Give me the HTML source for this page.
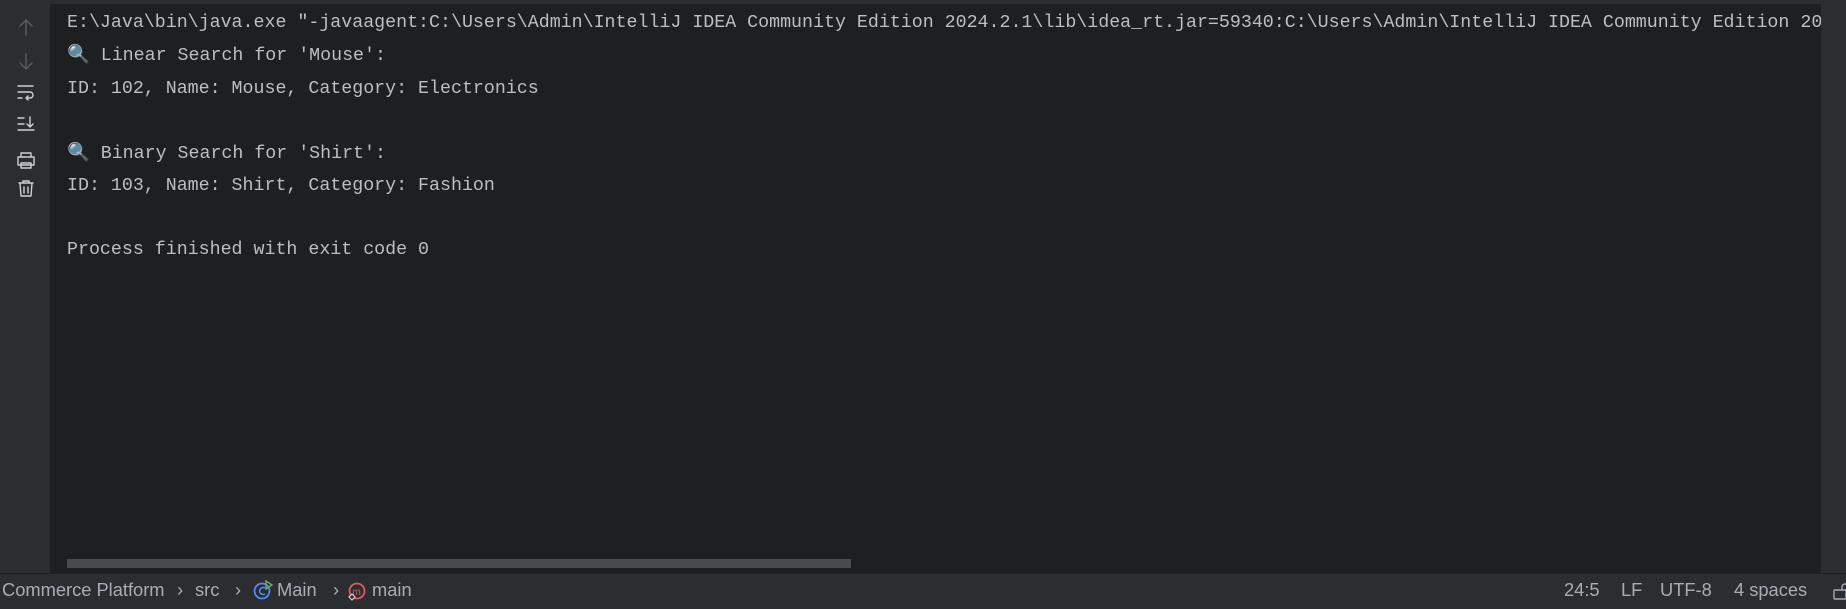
<!DOCTYPE html>
<html><head><meta charset="utf-8"><style>
html,body{margin:0;padding:0;width:1846px;height:608px;overflow:hidden;background:#1e1f22;}
.top{position:absolute;left:0;top:0;width:1846px;height:4px;background:#2b2d30;z-index:2;}
.gut{position:absolute;left:0;top:4px;width:50px;height:569px;background:#2b2d30;border-right:1px solid #1e1f22;}
.rs{position:absolute;left:1821px;top:4px;width:25px;height:569px;background:#2b2d30;z-index:2;}
.ln{position:absolute;left:67px;font-family:"Liberation Mono","Noto Sans CJK SC",monospace;font-size:18.3px;color:#bcbec4;white-space:pre;line-height:24px;}
.sb{position:absolute;left:67px;top:559px;width:784px;height:9px;background:#4a4b4e;border-radius:1px;}
.st{position:absolute;left:0;top:573px;width:1846px;height:35px;background:#2b2d30;border-top:1px solid #1e1f22;z-index:3;}
.t{position:absolute;top:578px;font-family:"Liberation Sans",sans-serif;font-size:18.3px;color:#a8adb5;line-height:24px;white-space:pre;z-index:4;}
svg{position:absolute;z-index:4;}
</style></head><body>
<div class="top"></div>
<div class="gut"></div>
<div class="rs"></div>
<svg width="50" height="210" style="left:0;top:0" fill="none" stroke-linecap="round" stroke-linejoin="round">
<g stroke="#5a5d63" stroke-width="1.4"><path d="M26 20v15M20 26l6-6 6 6"/><path d="M26 54v15M20 63l6 6 6-6"/></g>
<g stroke="#ced0d6" stroke-width="1.4">
<path d="M18 86h15M18 92h12a3 3 0 0 1 0 6h-4M28 96l-2 2 2 2M18 98h4"/>
<path d="M18 118h6M18 124h6M18 130h16M30 117v10M27 124l3 3 3-3"/>
<path d="M21 157v-4h10v4M18 157h16v8h-16zM21 163h10v5h-10z"/>
<path d="M19 183h14M23 183v-2h6v2M20 183l1 13h10l1-13M24 187v6M28 187v6"/>
</g></svg>
<div class="ln" style="top:11px">E:\Java\bin\java.exe "-javaagent:C:\Users\Admin\IntelliJ IDEA Community Edition 2024.2.1\lib\idea_rt.jar=59340:C:\Users\Admin\IntelliJ IDEA Community Edition 2024</div>
<div class="ln" style="top:44px">🔍 Linear Search for 'Mouse':</div>
<div class="ln" style="top:77px">ID: 102, Name: Mouse, Category: Electronics</div>
<div class="ln" style="top:142px">🔍 Binary Search for 'Shirt':</div>
<div class="ln" style="top:174px">ID: 103, Name: Shirt, Category: Fashion</div>
<div class="ln" style="top:238px">Process finished with exit code 0</div>
<div class="sb"></div>
<div class="st"></div>
<div class="t" style="left:2px">Commerce Platform</div>
<div class="t" style="left:177px">›</div>
<div class="t" style="left:195px">src</div>
<div class="t" style="left:235px">›</div>
<svg width="22" height="22" style="left:252px;top:579px"><circle cx="10" cy="12" r="7.5" stroke="#548af7" stroke-width="1.8" fill="none"/><path d="M13 9a3.5 3.5 0 1 0 0 6" stroke="#548af7" stroke-width="1.6" fill="none"/><path d="M14 2l6 4-6 4z" fill="none" stroke="#5fb865" stroke-width="1.4"/></svg>
<div class="t" style="left:277px">Main</div>
<div class="t" style="left:333px">›</div>
<svg width="22" height="22" style="left:346px;top:579px"><circle cx="11" cy="12" r="7.5" stroke="#db5c5c" stroke-width="1.8" fill="none"/><text x="6.5" y="16" font-size="10" fill="#db5c5c" font-family="Liberation Sans">m</text><path d="M6 15l3 3-3 3-3-3z" fill="#2b2d30" stroke="#ced0d6" stroke-width="1.2"/></svg>
<div class="t" style="left:372px">main</div>
<div class="t" style="left:1564px">24:5</div>
<div class="t" style="left:1621px">LF</div>
<div class="t" style="left:1660px">UTF-8</div>
<div class="t" style="left:1734px">4 spaces</div>
<svg width="14" height="20" style="left:1833px;top:582px" fill="none" stroke="#a8adb5" stroke-width="1.4"><rect x="1" y="8" width="12" height="9" rx="1"/><path d="M9 8V5a3 3 0 0 1 6 0"/></svg>
</body></html>
